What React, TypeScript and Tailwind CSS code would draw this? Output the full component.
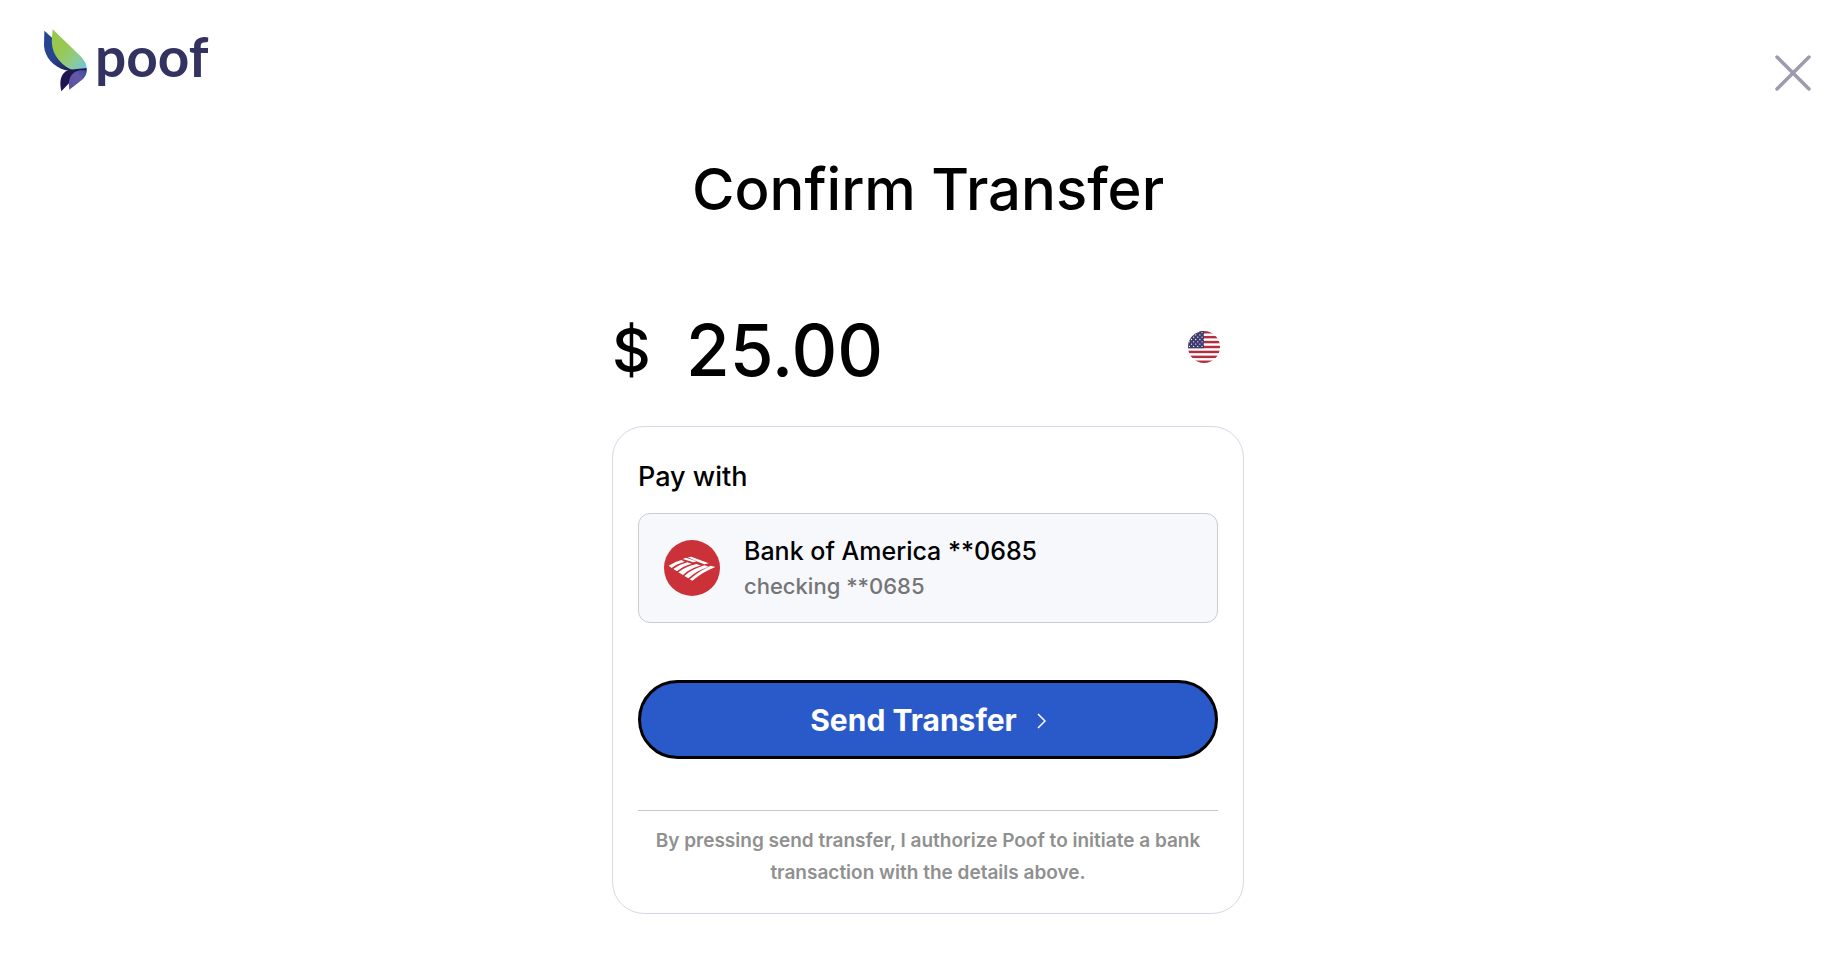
import { X } from 'lucide-react'

const stripes = [0, 2, 4, 6, 8, 10, 12]
const starRows = [0, 1, 2, 3, 4, 5, 6]

function PoofLogo() {
  return (
    <a href="#" aria-label="poof" className="flex items-start gap-[7px]">
      <svg viewBox="40 27 135 192" className="h-16 w-[45px]" aria-hidden="true">
        <defs>
          <linearGradient id="wing" x1="0" y1="0" x2="1" y2="1">
            <stop offset="0.4" stopColor="#98c84f" />
            <stop offset="0.7" stopColor="#8ecb8f" />
            <stop offset="1" stopColor="#6fc4e6" />
          </linearGradient>
          <linearGradient id="back" x1="0" y1="0" x2="1" y2="1">
            <stop offset="0.5" stopColor="#27458f" />
            <stop offset="1" stopColor="#1b1a50" />
          </linearGradient>
          <linearGradient id="tail" x1="1" y1="0" x2="0" y2="1">
            <stop offset="0" stopColor="#3a4c9c" />
            <stop offset="0.4" stopColor="#6457a6" />
            <stop offset="1" stopColor="#5a50a0" />
          </linearGradient>
        </defs>
        <path d="M44 32 L68 54 L130 152 L108 151 C70 140 46 112 43 78 Z" fill="url(#back)" />
        <path d="M69 28 L156 112 C166 124 171 134 171 145 L125 149 C84 130 62 92 67 52 Z" fill="url(#wing)" />
        <path d="M95 214 C89 186 90 160 118 149 L171 144 L171 153 L124 176 L118 190 Z" fill="#1b1650" />
        <path d="M119 209 C115 178 121 158 150 151 L171 151 C172 168 160 178 148 187 Z" fill="url(#tail)" />
      </svg>
      <span className="font-['Lato',sans-serif] text-[55px] leading-[54px] font-bold text-[#343260]">poof</span>
    </a>
  )
}

function FlagIcon() {
  return (
    <svg viewBox="0 0 32 32" className="mb-1.5 size-8" role="img" aria-label="United States">
      <clipPath id="flag-circle">
        <circle cx="16" cy="16" r="16" />
      </clipPath>
      <g clipPath="url(#flag-circle)">
        <rect width="32" height="32" fill="#fff" />
        {stripes.map((s) => (
          <rect key={s} y={(s * 32) / 13} width="32" height={32 / 13} fill="#b22f3f" />
        ))}
        <rect width="16" height={(32 / 13) * 7} fill="#3c3b6e" />
        {starRows.map((row) =>
          [0, 1, 2, 3].map((col) => (
            <circle key={`${row}-${col}`} cx={1.4 + col * 4.2 + (row % 2) * 2.1} cy={1.6 + row * 2.3} r="0.65" fill="#fff" />
          )),
        )}
      </g>
    </svg>
  )
}

function BankIcon() {
  return (
    <svg viewBox="0 0 168 168" className="size-14 shrink-0" aria-hidden="true">
      <circle cx="84" cy="84" r="84" fill="#cb3138" />
      <g fill="#fff">
        <path d="M14 77 C30 68 41 63 52 60 L62 65 C47 69 34 75 23 84 Z" />
        <path d="M28 87 C42 77 56 71 70 67 L83 71 C65 76 51 83 39 94 Z" />
        <path d="M43 97 C60 83 78 76 98 72 L111 77 C91 81 71 91 57 105 Z" />
        <path d="M61 108 C79 92 99 83 121 76 L134 80 C110 88 90 99 73 115 Z" />
        <path d="M77 118 C98 99 118 88 140 77 L154 81 C129 91 107 104 85 122 Z" />
        <path d="M56 57 L66 53 L98 64 L88 67 Z" />
        <path d="M71 52 L82 50 L134 70 L121 73 L103 66 Z" />
      </g>
    </svg>
  )
}

export default function App() {
  return (
    <div className="min-h-screen bg-white font-['Inter',sans-serif] text-black">
      <header className="flex h-[153px] items-start justify-between pt-[29px] pr-[23px] pl-[43px]">
        <PoofLogo />
        <button type="button" aria-label="Close" className="mt-3 text-[#9d9bb0]">
          <X className="size-16" strokeWidth={1.3} />
        </button>
      </header>

      <main className="flex flex-col items-center pb-16 pl-2">
        <h1 className="text-[58px] leading-[72px] font-medium">Confirm Transfer</h1>

        <div className="mt-[89px] w-full max-w-[632px]">
          <div className="flex items-center pr-6">
            <span className="w-[74px] text-[60px] leading-[72px] font-medium">$</span>
            <span className="grow text-[71px] leading-[72px] font-medium">25.00</span>
            <FlagIcon />
          </div>

          <section className="mt-10 rounded-[32px] border border-[#d9d7e8] px-[25px] pt-[34px] pb-6">
            <h2 className="text-[27px] leading-8 font-medium">Pay with</h2>

            <div className="mt-5 flex h-[110px] items-center gap-6 rounded-xl border border-[#c9cccf] bg-[#f6f8fc] px-[25px]">
              <BankIcon />
              <div>
                <p className="text-[25px] leading-9 font-medium">Bank of America **0685</p>
                <p className="text-[22px] leading-[34px] font-medium text-[#757575]">checking **0685</p>
              </div>
            </div>

            <button
              type="button"
              className="mt-[57px] flex h-[79px] w-full items-center justify-center gap-5 rounded-full border-3 border-black bg-[#2a5ac9] pt-0.5 text-[30px] font-bold text-white"
            >
              Send Transfer
              <svg viewBox="0 0 9 16" className="h-4 w-[9px]" fill="none" stroke="currentColor" strokeWidth="1.5" aria-hidden="true">
                <path d="M1 1 L8 8 L1 15" />
              </svg>
            </button>

            <p className="mt-[51px] border-t border-[#c9c9cc] px-3 pt-[14px] text-center text-[19px] leading-8 font-semibold text-[#909090]">
              By pressing send transfer, I authorize Poof to initiate a bank transaction with the details above.
            </p>
          </section>
        </div>
      </main>
    </div>
  )
}
